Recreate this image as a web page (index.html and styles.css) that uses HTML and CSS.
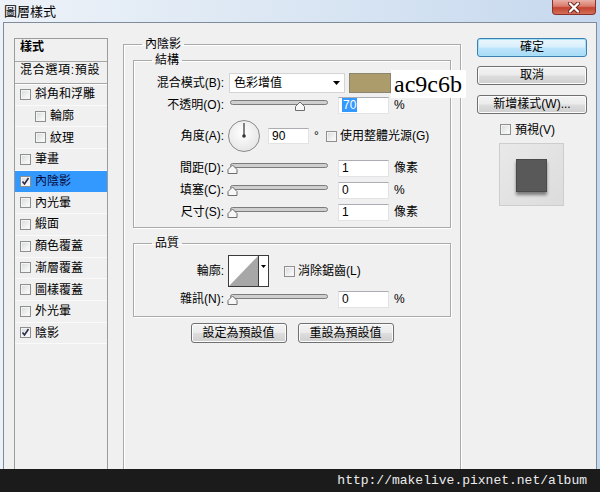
FILE: index.html
```html
<!DOCTYPE html>
<html>
<head>
<meta charset="utf-8">
<title>圖層樣式</title>
<link rel="stylesheet" href="styles.css">
</head>
<body>
<div class="win">
  <div class="titlebar">
    <span class="title">圖層樣式</span>
    <div class="close">
      <svg width="16" height="11" viewBox="0 0 16 11"><path d="M4 1.5L12 9.5M12 1.5L4 9.5" stroke="#6a1f18" stroke-width="4" stroke-linecap="round"/><path d="M4 1.5L12 9.5M12 1.5L4 9.5" stroke="#fff" stroke-width="2.4" stroke-linecap="round"/></svg>
    </div>
  </div>
  <div class="client">
    <div class="styles">
      <div class="hdr">樣式</div>
      <div class="blend">混合選項:預設</div>
      <div class="item"><span class="cb"></span>斜角和浮雕</div>
      <div class="item sub"><span class="cb"></span>輪廓</div>
      <div class="item sub"><span class="cb"></span>紋理</div>
      <div class="item"><span class="cb"></span>筆畫</div>
      <div class="item sel"><span class="cb"><svg width="9" height="9" viewBox="0 0 9 9"><path d="M1.5 4.5L3.5 7L7.5 1" fill="none" stroke="#2a2a4a" stroke-width="1.6"/></svg></span>內陰影</div>
      <div class="item"><span class="cb"></span>內光暈</div>
      <div class="item"><span class="cb"></span>緞面</div>
      <div class="item"><span class="cb"></span>顏色覆蓋</div>
      <div class="item"><span class="cb"></span>漸層覆蓋</div>
      <div class="item"><span class="cb"></span>圖樣覆蓋</div>
      <div class="item"><span class="cb"></span>外光暈</div>
      <div class="item"><span class="cb"><svg width="9" height="9" viewBox="0 0 9 9"><path d="M1.5 4.5L3.5 7L7.5 1" fill="none" stroke="#2a2a4a" stroke-width="1.6"/></svg></span>陰影</div>
    </div>

    <fieldset class="grp main">
      <legend>內陰影</legend>
      <fieldset class="grp inner struct">
        <legend>結構</legend>
        <div class="row r1">
          <span class="lbl">混合模式(B):</span>
          <div class="select"><span>色彩增值</span><svg width="7" height="4" viewBox="0 0 7 4"><path d="M0 0H7L3.5 4Z" fill="#000"/></svg></div>
          <div class="swatch"></div>
        </div>
        <div class="row r2">
          <span class="lbl">不透明(O):</span>
          <svg class="slider" width="104" height="18" viewBox="0 0 104 18"><rect x="4.5" y="4.5" width="97" height="4" rx="2" fill="#cfcfcf" stroke="#7c7c7c"/><path d="M69.5 14.5V10.5L74 6L78.5 10.5V14.5Z" fill="#f7f7f7" stroke="#6d6d6d"/></svg>
          <div class="field"><span class="hl">70</span></div>
          <span class="unit">%</span>
        </div>
        <div class="row r3">
          <span class="lbl">角度(A):</span>
          <svg class="dial" width="32" height="32" viewBox="0 0 32 32"><defs><radialGradient id="dg" cx="0.45" cy="0.4" r="0.6"><stop offset="0" stop-color="#ffffff"/><stop offset="1" stop-color="#e6e6e6"/></radialGradient></defs><circle cx="16" cy="16" r="15.5" fill="url(#dg)" stroke="#8a8a8a"/><path d="M16 16V3" stroke="#333" stroke-width="1.2"/><circle cx="16" cy="16" r="1.8" fill="#333"/></svg>
          <div class="field angle">90</div>
          <span class="deg">°</span>
          <span class="cb"></span>
          <span class="cbl">使用整體光源(G)</span>
        </div>
        <div class="row r4">
          <span class="lbl">間距(D):</span>
          <svg class="slider" width="104" height="18" viewBox="0 0 104 18"><rect x="4.5" y="4.5" width="97" height="4" rx="2" fill="#cfcfcf" stroke="#7c7c7c"/><path d="M2 14.5V10.5L6.5 6L11 10.5V14.5Z" fill="#f7f7f7" stroke="#6d6d6d"/></svg>
          <div class="field">1</div>
          <span class="unit">像素</span>
        </div>
        <div class="row r5">
          <span class="lbl">填塞(C):</span>
          <svg class="slider" width="104" height="18" viewBox="0 0 104 18"><rect x="4.5" y="4.5" width="97" height="4" rx="2" fill="#cfcfcf" stroke="#7c7c7c"/><path d="M2 14.5V10.5L6.5 6L11 10.5V14.5Z" fill="#f7f7f7" stroke="#6d6d6d"/></svg>
          <div class="field">0</div>
          <span class="unit">%</span>
        </div>
        <div class="row r6">
          <span class="lbl">尺寸(S):</span>
          <svg class="slider" width="104" height="18" viewBox="0 0 104 18"><rect x="4.5" y="4.5" width="97" height="4" rx="2" fill="#cfcfcf" stroke="#7c7c7c"/><path d="M2 14.5V10.5L6.5 6L11 10.5V14.5Z" fill="#f7f7f7" stroke="#6d6d6d"/></svg>
          <div class="field">1</div>
          <span class="unit">像素</span>
        </div>
      </fieldset>

      <fieldset class="grp inner quality">
        <legend>品質</legend>
        <div class="row q1">
          <span class="lbl">輪廓:</span>
          <svg class="contour" width="41" height="32" viewBox="0 0 41 32"><rect x="0.5" y="0.5" width="40" height="31" fill="#fff" stroke="#3a3a3a"/><path d="M1 31L30 1V31Z" fill="#a7a7a7"/><path d="M30.5 0.5V31.5" stroke="#3a3a3a"/><path d="M33 10H38L35.5 13Z" fill="#000"/></svg>
          <span class="cb"></span>
          <span class="cbl">消除鋸齒(L)</span>
        </div>
        <div class="row q2">
          <span class="lbl">雜訊(N):</span>
          <svg class="slider" width="104" height="18" viewBox="0 0 104 18"><rect x="4.5" y="4.5" width="97" height="4" rx="2" fill="#cfcfcf" stroke="#7c7c7c"/><path d="M2 14.5V10.5L6.5 6L11 10.5V14.5Z" fill="#f7f7f7" stroke="#6d6d6d"/></svg>
          <div class="field">0</div>
          <span class="unit">%</span>
        </div>
      </fieldset>

      <div class="defbtns">
        <div class="btn wide">設定為預設值</div>
        <div class="btn wide">重設為預設值</div>
      </div>
    </fieldset>

    <div class="side">
      <div class="btn ok">確定</div>
      <div class="btn cancel">取消</div>
      <div class="btn newstyle">新增樣式(W)...</div>
      <div class="preview-toggle"><span class="cb"></span><span>預視(V)</span></div>
      <div class="preview"><div class="sq"></div></div>
    </div>
  </div>
  <div class="watermark">http://makelive.pixnet.net/album</div>
</div>
<div class="annot">ac9c6b</div>
</body>
</html>
```

FILE: styles.css
```css
* { box-sizing: border-box; margin: 0; padding: 0; }
html, body { width: 600px; height: 492px; overflow: hidden; }
body {
  font-family: "Liberation Sans", "Noto Sans CJK TC", sans-serif;
  font-size: 12px;
  line-height: 14px;
  color: #000;
  background: #dfe9f4;
  position: relative;
}
.win {
  width: 600px;
  height: 492px;
  display: flex;
  flex-direction: column;
  background: linear-gradient(90deg, #edf2f8 0%, #dae6f3 50%, #c6d8ee 100%);
}
.titlebar {
  height: 22px;
  flex: none;
  display: flex;
  justify-content: space-between;
  align-items: flex-start;
  padding-left: 4px;
}
.title {
  font-family: "Noto Sans CJK TC", sans-serif;
  font-size: 13px;
  line-height: 13px;
  margin-top: 4px;
}
.close {
  width: 44px;
  height: 15px;
  margin-right: 4px;
  border: 1px solid #8a3128;
  border-top: none;
  border-radius: 0 0 4px 4px;
  background: linear-gradient(#eab0a6 0%, #d97a6c 45%, #c2432f 55%, #d4705a 100%);
  display: flex;
  align-items: center;
  justify-content: center;
}
.client {
  flex: none;
  height: 447px;
  margin: 0 3px;
  border: 1px solid #7f8c9c;
  border-bottom: none;
  background: #f0f0f0;
  display: flex;
  align-items: flex-start;
  overflow: hidden;
}

/* checkbox */
.cb {
  width: 11px;
  height: 11px;
  flex: none;
  border: 1px solid #8e8f8f;
  background: linear-gradient(135deg, #d6d8dc 0%, #f4f4f4 70%, #ffffff 100%);
  box-shadow: inset 0 0 0 1px #f4f4f4;
  display: flex;
  align-items: center;
  justify-content: center;
}

/* styles list */
.styles {
  width: 94px;
  height: 450px;
  margin: 15px 0 0 10px;
  border: 1px solid #9c9c9c;
  border-bottom: none;
  background: #f0f0f0;
  flex: none;
}
.hdr {
  height: 23px;
  border-bottom: 1px solid #a6a6a6;
  padding-left: 5px;
  font-family: "Noto Sans CJK TC", sans-serif;
  font-weight: bold;
  line-height: 14px;
}
.blend {
  height: 22px;
  border-bottom: 1px solid #a6a6a6;
  padding: 1px 0 0 5px;
  line-height: 14px;
  letter-spacing: 0.7px;
  box-shadow: 0 1px 0 #fff;
}
.item {
  height: 21.7px;
  display: flex;
  align-items: center;
  gap: 4px;
  padding-left: 5px;
  border-bottom: 1px solid #fafafa;
}
.item.sub { padding-left: 20px; }
.item.sel { background: #3399ff; color: #0a0a3a; border-bottom-color: #3399ff; }

/* group boxes */
fieldset.grp {
  border: 1px solid #a9a9a9;
  padding: 0;
  min-width: 0;
  box-shadow: inset 1px 1px 0 #fff, 1px 1px 0 #fff;
}
fieldset.grp > legend {
  margin-left: 18px;
  padding: 0 3px;
  line-height: 14px;
}
.main {
  width: 338px;
  height: 450px;
  margin: 14px 0 0 15px;
  border-bottom: none;
  flex: none;
}
.inner {
  width: 318px;
  margin-left: 9px;
}
.struct { margin-top: 2px; padding-bottom: 6px !important; }
.quality { margin-top: 8px; padding-bottom: 8px !important; }

.row { display: flex; align-items: center; height: 18px; }
.lbl { width: 90px; text-align: right; flex: none; }
.r1 { height: 20px; margin-top: 6px; }
.r2 { margin-top: 3px; }
.r3 { height: 32px; margin-top: 6px; }
.r4 { margin-top: 7px; }
.r5, .r6 { margin-top: 4px; }
.q1 { height: 32px; margin-top: 5px; }
.q2 { margin-top: 3px; }

.select {
  width: 116px;
  height: 20px;
  margin-left: 5px;
  background: #fff;
  border: 1px solid #d4d4d4;
  display: flex;
  align-items: center;
  justify-content: space-between;
  padding: 0 4px 0 4px;
}
.swatch {
  width: 42px;
  height: 20px;
  margin-left: 4px;
  background: #ac9c6b;
  border: 1px solid #8d8570;
}
.slider { flex: none; margin-left: 2px; }
.field {
  width: 51px;
  height: 17px;
  margin-left: 8px;
  background: #fff;
  border: 1px solid #e2e3e5;
  border-top-color: #abadb3;
  padding-left: 3px;
  line-height: 15px;
  flex: none;
}
.hl { background: #3399ff; color: #fff; padding: 0 1px; display: inline-block; line-height: 14px; }
.unit { margin-left: 5px; }
.dial { flex: none; margin-left: 4px; }
.field.angle { width: 41px; height: 16px; margin-left: 8px; }
.deg { margin-left: 5px; width: 8px; }
.r3 .cb { margin-left: 4px; }
.cbl { margin-left: 3px; }
.contour { flex: none; margin-left: 4px; }
.q1 .cb { margin-left: 15px; }

.defbtns {
  display: flex;
  justify-content: center;
  gap: 11px;
  margin-top: 6px;
}
.btn {
  height: 19px;
  border: 1px solid #707070;
  border-radius: 3px;
  background: linear-gradient(#f3f3f3 0%, #ebebeb 48%, #dddddd 52%, #cfcfcf 100%);
  box-shadow: inset 0 0 0 1px #fcfcfc;
  text-align: center;
  line-height: 17px;
}
.btn.wide { width: 96px; height: 20px; line-height: 18px; }

.side {
  width: 110px;
  margin: 15px 0 0 16px;
  flex: none;
  display: flex;
  flex-direction: column;
}
.btn.ok {
  border-color: #3c7fb1;
  box-shadow: inset 0 0 0 1px #a6e1f5;
  background: linear-gradient(#eaf6fd 0%, #d9f0fc 48%, #bee6fd 52%, #a7d9f5 100%);
}
.btn.cancel { margin-top: 9px; }
.btn.newstyle { margin-top: 10px; }
.preview-toggle {
  display: flex;
  align-items: center;
  gap: 4px;
  height: 13px;
  margin: 9px 0 0 23px;
}
.preview {
  width: 65px;
  height: 63px;
  margin: 7px 0 0 22px;
  border: 1px solid #cdcdcd;
  background: linear-gradient(135deg, #e9e9e9 0%, #dcdcdc 100%);
  display: flex;
  justify-content: center;
  padding-top: 15px;
}
.sq {
  width: 31px;
  height: 33px;
  background: #595959;
  border: 1px solid #4a4a4a;
  box-shadow: 0 3px 3px rgba(0, 0, 0, 0.45);
}

.watermark {
  flex: none;
  height: 23px;
  background: #1b1b1b;
  color: #ececec;
  font-family: "Liberation Mono", monospace;
  font-size: 13px;
  line-height: 23px;
  text-align: right;
  padding-right: 13px;
}

.annot {
  position: absolute;
  left: 391px;
  top: 70px;
  width: 75px;
  height: 28px;
  background: #fff;
  font-family: "Liberation Serif", serif;
  font-size: 24px;
  line-height: 28px;
  padding-left: 3px;
}
```
